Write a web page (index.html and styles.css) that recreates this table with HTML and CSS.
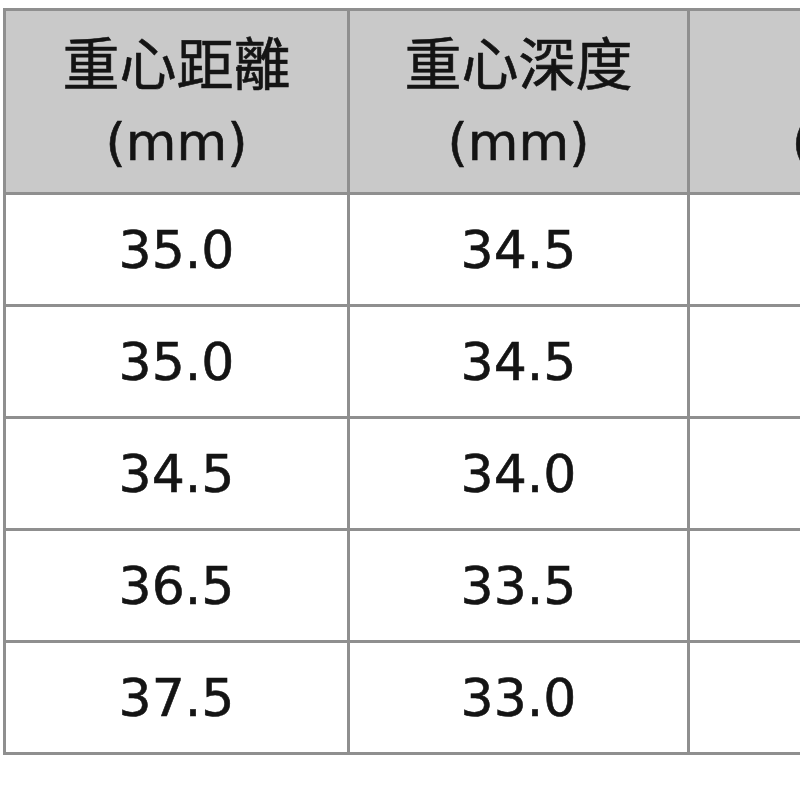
FILE: index.html
```html
<!DOCTYPE html>
<html>
<head>
<meta charset="utf-8">
<link rel="stylesheet" href="styles.css">
</head>
<body>
<table class="spec">
  <thead>
    <tr>
      <th class="c1"><span class="cjk">重心距離</span><br>(mm)</th>
      <th class="c2"><span class="cjk">重心深度</span><br>(mm)</th>
      <th class="c3"><span class="cjk">慣性矩</span><br>(kg·cm²)</th>
    </tr>
  </thead>
  <tbody>
    <tr><td>35.0</td><td>34.5</td><td>4500</td></tr>
    <tr><td>35.0</td><td>34.5</td><td>4500</td></tr>
    <tr><td>34.5</td><td>34.0</td><td>4400</td></tr>
    <tr><td>36.5</td><td>33.5</td><td>4600</td></tr>
    <tr><td>37.5</td><td>33.0</td><td>4700</td></tr>
  </tbody>
</table>
</body>
</html>
```

FILE: styles.css
```css
html, body {
  background: #ffffff;
}
body {
  margin: 8px 0 0 3px;
  overflow: hidden;
  width: 1200px;
}
.spec {
  border-collapse: collapse;
  font-family: "DejaVu Sans", "Noto Sans CJK TC", sans-serif;
  color: #141414;
  font-size: 52px;
  table-layout: fixed;
  -webkit-text-stroke: 0.6px #141414;
}
.spec th, .spec td {
  border: 3px solid #8f8f8f;
  text-align: center;
  vertical-align: middle;
  padding: 0;
}
.spec th {
  background: #c9c9c9;
  font-weight: normal;
  height: 181px;
  line-height: 75px;
}
.spec td {
  height: 109px;
  line-height: 60px;
}
.cjk {
  font-family: "Noto Sans CJK TC", sans-serif;
  font-size: 57px;
}
.c1 { width: 341px; }
.c2 { width: 337px; }
.c3 { width: 424px; }
```
